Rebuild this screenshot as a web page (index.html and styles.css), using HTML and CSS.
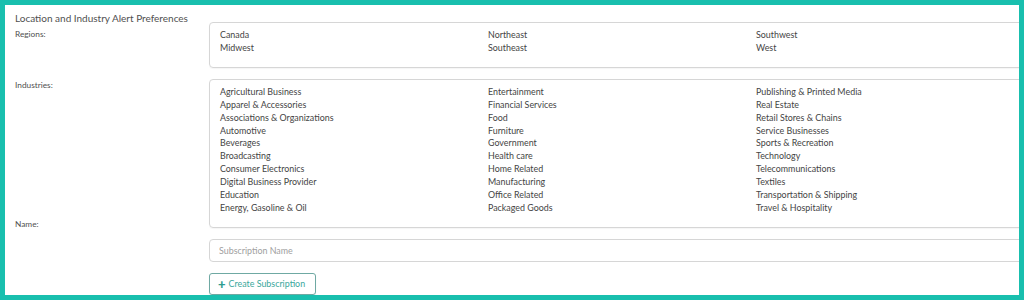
FILE: index.html
```html
<!DOCTYPE html>
<html>
<head>
<meta charset="utf-8">
<link rel="stylesheet" href="styles.css">
</head>
<body>
<div class="frame">
  <div class="page">
    <h1 class="title">Location and Industry Alert Preferences</h1>
    <div class="form">
      <div class="label">Regions:</div>
      <div class="box">
        <ul class="col"><li>Canada</li><li>Midwest</li></ul>
        <ul class="col"><li>Northeast</li><li>Southeast</li></ul>
        <ul class="col"><li>Southwest</li><li>West</li></ul>
      </div>

      <div class="label label-top">Industries:</div>
      <div class="box">
        <ul class="col">
          <li>Agricultural Business</li>
          <li>Apparel &amp; Accessories</li>
          <li>Associations &amp; Organizations</li>
          <li>Automotive</li>
          <li>Beverages</li>
          <li>Broadcasting</li>
          <li>Consumer Electronics</li>
          <li>Digital Business Provider</li>
          <li>Education</li>
          <li>Energy, Gasoline &amp; Oil</li>
        </ul>
        <ul class="col">
          <li>Entertainment</li>
          <li>Financial Services</li>
          <li>Food</li>
          <li>Furniture</li>
          <li>Government</li>
          <li>Health care</li>
          <li>Home Related</li>
          <li>Manufacturing</li>
          <li>Office Related</li>
          <li>Packaged Goods</li>
        </ul>
        <ul class="col">
          <li>Publishing &amp; Printed Media</li>
          <li>Real Estate</li>
          <li>Retail Stores &amp; Chains</li>
          <li>Service Businesses</li>
          <li>Sports &amp; Recreation</li>
          <li>Technology</li>
          <li>Telecommunications</li>
          <li>Textiles</li>
          <li>Transportation &amp; Shipping</li>
          <li>Travel &amp; Hospitality</li>
        </ul>
      </div>

      <div class="label label-name">Name:</div>
      <div class="field">
        <input class="input" type="text" placeholder="Subscription Name">
        <button class="btn" type="button"><span class="plus">+</span><span>Create Subscription</span></button>
      </div>
    </div>
  </div>
</div>
</body>
</html>
```

FILE: styles.css
```css
html, body {
  margin: 0;
  padding: 0;
  background: #ffffff;
}

.frame {
  box-sizing: border-box;
  width: 1024px;
  height: 300px;
  border: 5px solid #19bfae;
  overflow: hidden;
  background: #ffffff;
}

.page {
  padding: 6px 0 0 10px;
  font-family: Lato, "Liberation Sans", sans-serif;
  color: #454545;
}

.title {
  margin: 0 0 -3px 0;
  font-size: 10px;
  font-weight: 400;
  line-height: 14px;
  color: #505050;
}

.form {
  display: grid;
  grid-template-columns: 194px 830px;
  row-gap: 11px;
}

.label {
  font-size: 8.3px;
  line-height: 12px;
  color: #505050;
  padding-top: 6px;
}

.label-top {
  padding-top: 0;
}

.label-name {
  margin-top: -27px;
}

.box {
  display: flex;
  border: 1px solid #d6d6d6;
  border-radius: 4px;
  padding: 6px 0 12px 10px;
  box-shadow: 0 1px 1px rgba(0,0,0,0.04);
}

.col {
  list-style: none;
  margin: 0;
  padding: 0;
  width: 268px;
  flex: none;
  font-size: 8.9px;
  line-height: 12.9px;
  color: #444;
}

.field {
  display: flex;
  flex-direction: column;
  align-items: flex-start;
  gap: 11px;
}

.input {
  box-sizing: border-box;
  width: 830px;
  height: 23px;
  border: 1px solid #d6d6d6;
  border-radius: 4px;
  padding: 0 9px;
  font-family: inherit;
  font-size: 8.9px;
  color: #444;
  outline: none;
  margin: 0;
}

.input::placeholder {
  color: #a0a0a0;
}

.btn {
  box-sizing: border-box;
  display: flex;
  align-items: center;
  gap: 3px;
  height: 22px;
  width: 107px;
  border: 1px solid #6fa9a3;
  border-radius: 3px;
  background: #ffffff;
  color: #3aa79c;
  font-family: inherit;
  font-size: 8.9px;
  padding: 0 0 0 8px;
  white-space: nowrap;
  box-shadow: 0 1px 1px rgba(0,0,0,0.08);
}

.plus {
  font-weight: 900;
  font-size: 13px;
  line-height: 12px;
  color: #2f9d90;
}
```
